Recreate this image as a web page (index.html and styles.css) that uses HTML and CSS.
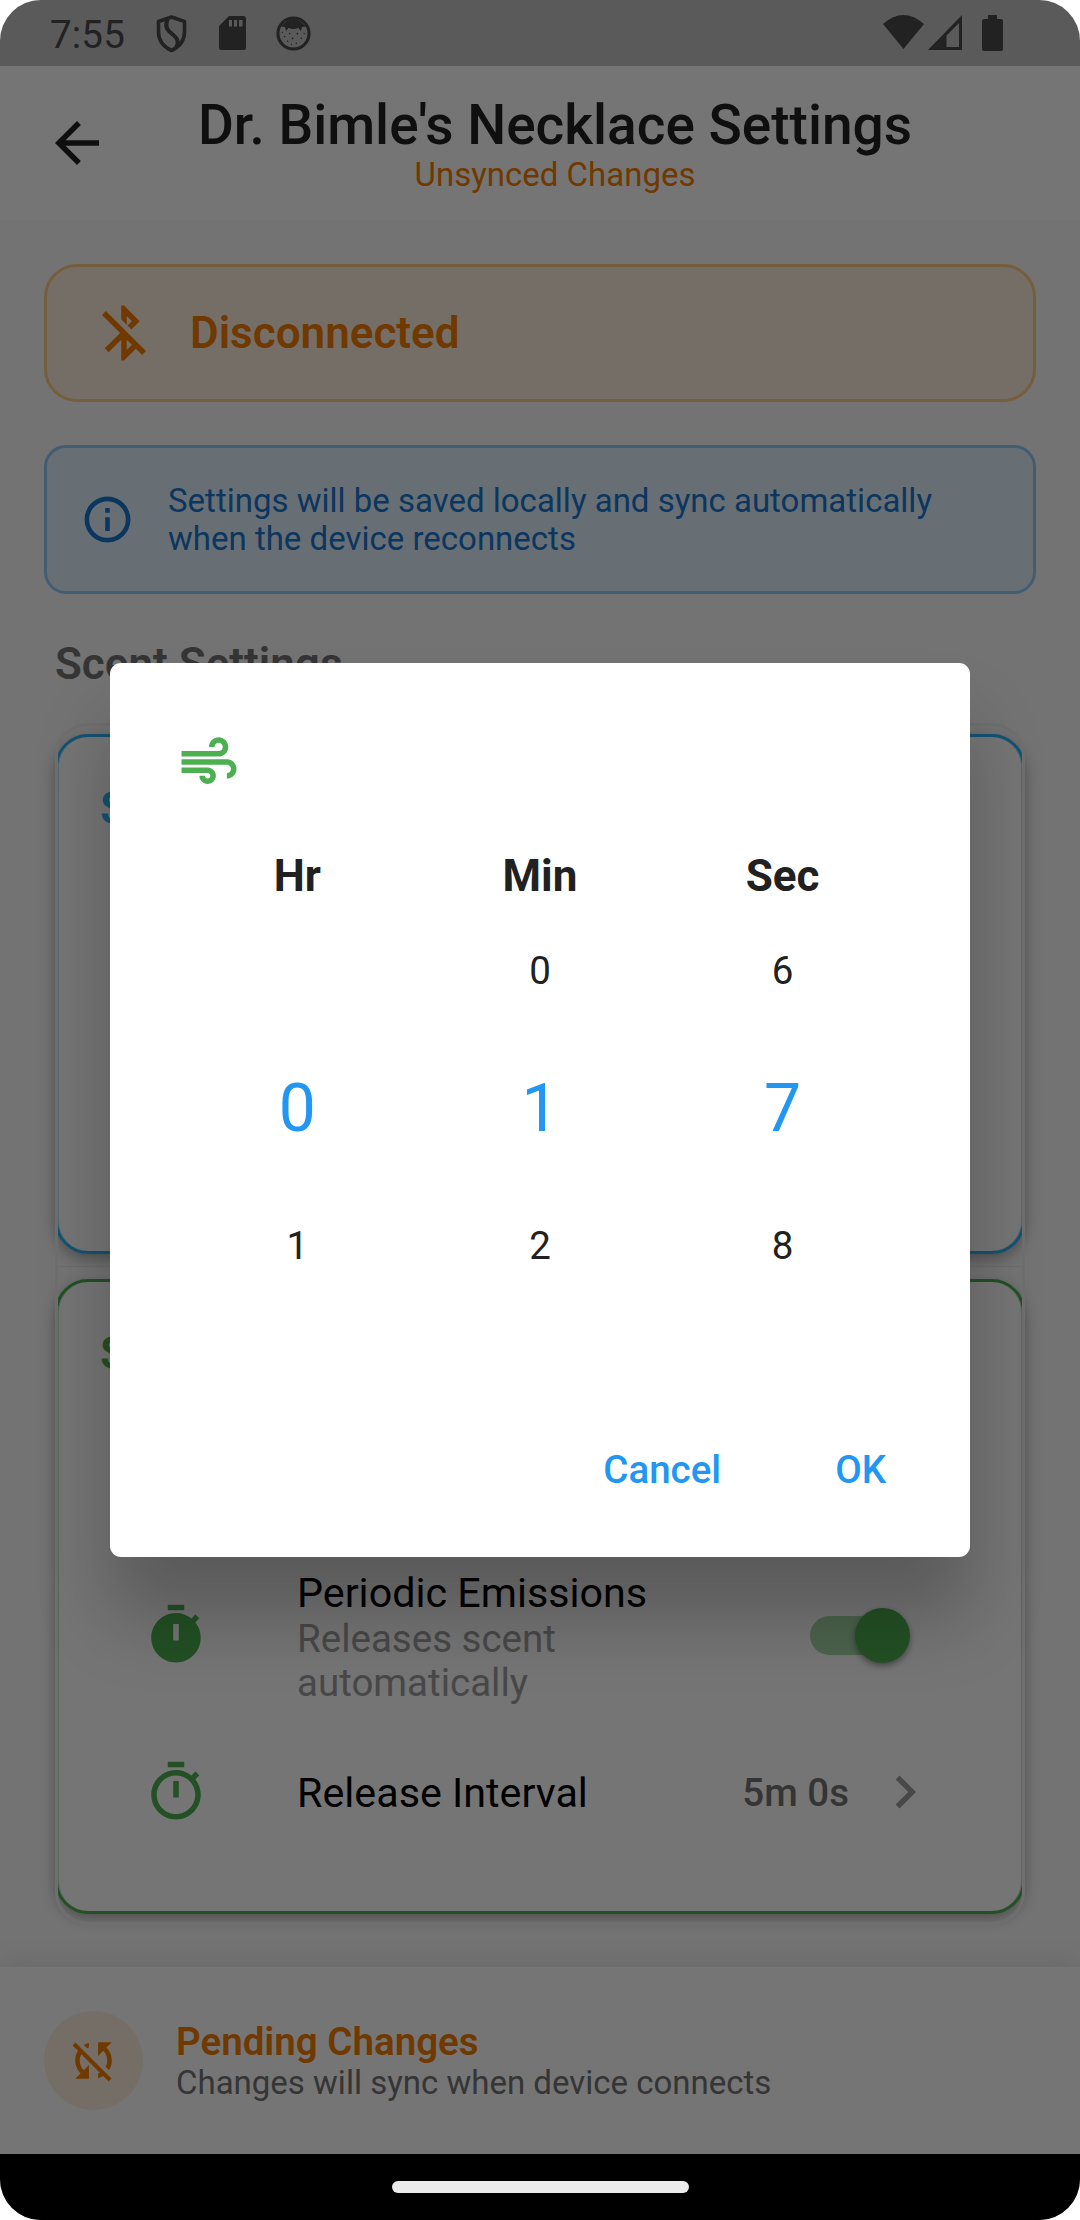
FILE: index.html
```html
<!DOCTYPE html>
<html lang="en">
<head>
<meta charset="utf-8">
<title>Dr. Bimle's Necklace Settings</title>
<link rel="stylesheet" href="styles.css">
</head>
<body>
<div class="phone">
  <div class="status-bar">
    <span class="clock">7:55</span>
    <svg class="st-shield" viewBox="0 0 31 38"><path d="M15.500 2L28.500 6.500V17C28.500 25.500 23 32 15.500 35.500C8 32 2.500 25.500 2.500 17V6.500Z" fill="none" stroke="currentColor" stroke-width="3.600" stroke-linejoin="round"/><path d="M12 4C8 11 11 15 15 18C20 22 24 25 20 33" fill="none" stroke="currentColor" stroke-width="4"/></svg>
    <svg class="st-sd" viewBox="0 0 27 34"><path fill-rule="evenodd" d="M10 0H24.500Q27 0 27 2.500V31.500Q27 34 24.500 34H2.500Q0 34 0 31.500V10ZM10 4V10.500H13V4ZM15 4V10.500H18V4ZM20 4V10.500H23.500V4Z" fill="currentColor"/></svg>
    <svg class="st-face" viewBox="0 0 36 36"><circle cx="18" cy="18" r="16" fill="none" stroke="currentColor" stroke-width="3.200"/><path d="M5 11Q18-5 31 11L27 11 25.500 15.500 23 12Q18 14.500 13 12L10.500 15.500 9 11Z" fill="currentColor"/><g fill="currentColor"><circle cx="6.500" cy="17" r=".7"/><circle cx="29" cy="18" r=".7"/><circle cx="9" cy="21" r=".8"/><circle cx="14" cy="18" r=".8"/><circle cx="17" cy="23" r="1"/><circle cx="22" cy="18" r=".9"/><circle cx="26" cy="23" r=".8"/><circle cx="12" cy="26" r=".8"/><circle cx="16" cy="29" r=".7"/><circle cx="21" cy="28" r=".8"/></g></svg>
    <span class="spacer"></span>
    <svg class="st-wifi" viewBox="0 0 41 34"><path d="M0 9Q20.500-9 41 9L20.500 34Z" fill="currentColor"/></svg>
    <svg class="st-signal" viewBox="0 0 34 35"><path fill-rule="evenodd" d="M34 0V35H0ZM31 8L18.500 20.500V32H31Z" fill="currentColor"/></svg>
    <svg class="st-battery" viewBox="0 0 21 36"><path d="M6 0H15V4H19Q21 4 21 6V34Q21 36 19 36H2Q0 36 0 34V6Q0 4 2 4H6Z" fill="currentColor"/></svg>
  </div>

  <header class="app-bar">
    <svg class="icon back" viewBox="0 0 24 24"><path d="M20 11H7.830l5.590-5.590L12 4l-8 8 8 8 1.410-1.410L7.830 13H20v-2z"/></svg>
    <div class="headline">
      <h1 class="title">Dr. Bimle's Necklace Settings</h1>
      <div class="sync-state">Unsynced Changes</div>
    </div>
  </header>

  <main class="content">
    <section class="banner banner-warn">
      <svg class="icon" viewBox="0 0 24 24"><path d="M13 5.830l1.880 1.880-1.600 1.600 1.410 1.410 3.020-3.020L12 2h-1v5.030l2 2v-3.200zM5.410 4L4 5.410 10.590 12 5 17.590 6.410 19 11 14.410V22h1l4.290-4.290 2.300 2.290L20 18.590 5.410 4zM13 18.170v-3.760l1.880 1.880L13 18.170z"/></svg>
      <span class="banner-title">Disconnected</span>
    </section>
    <section class="banner banner-info">
      <svg class="icon icon-sm" viewBox="0 0 24 24"><path d="M11 7h2v2h-2zm0 4h2v6h-2zm1-9C6.480 2 2 6.480 2 12s4.480 10 10 10 10-4.480 10-10S17.520 2 12 2zm0 18c-4.410 0-8-3.590-8-8s3.590-8 8-8 8 3.590 8 8-3.590 8-8 8z"/></svg>
      <p class="banner-text">Settings will be saved locally and sync automatically<br>when the device reconnects</p>
    </section>

    <h2 class="section-title">Scent Settings</h2>
    <div class="panel">
      <section class="card card-blue">
        <h3 class="card-title">Scent 1</h3>
      </section>
      <section class="card card-green">
        <h3 class="card-title">Scent 2</h3>
        <div class="row row-periodic">
          <svg class="icon" viewBox="0 0 24 24"><path d="M9 1h6v2H9zM19.030 7.390l1.420-1.420c-.43-.51-.9-.99-1.410-1.410l-1.420 1.420C16.070 4.740 14.120 4 12 4c-4.970 0-9 4.030-9 9s4.020 9 9 9 9-4.030 9-9c0-2.120-.74-4.070-1.970-5.610zM13 14h-2V8h2v6z"/></svg>
          <div class="row-text">
            <div class="row-title">Periodic Emissions</div>
            <div class="row-sub">Releases scent<br>automatically</div>
          </div>
          <div class="switch"><span class="thumb"></span></div>
        </div>
        <div class="row row-interval">
          <svg class="icon" viewBox="0 0 24 24"><path d="M15 1H9v2h6V1zm-4 13h2V8h-2v6zm8.030-6.610l1.420-1.420c-.43-.51-.9-.99-1.410-1.410l-1.420 1.420C16.070 4.740 14.120 4 12 4c-4.970 0-9 4.030-9 9s4.020 9 9 9 9-4.030 9-9c0-2.120-.74-4.070-1.970-5.610zM12 20c-3.870 0-7-3.130-7-7s3.130-7 7-7 7 3.130 7 7-3.130 7-7 7z"/></svg>
          <div class="row-text"><div class="row-title">Release Interval</div></div>
          <span class="row-value">5m 0s</span>
          <svg class="icon chevron" viewBox="0 0 24 24"><path d="M10 6L8.590 7.410 13.170 12l-4.580 4.590L10 18l6-6z"/></svg>
        </div>
      </section>
    </div>
  </main>

  <footer class="pending">
    <div class="avatar"><svg class="icon icon-sm" viewBox="0 0 24 24"><path d="M10 6.350V4.260c-.8.210-1.550.540-2.230.960l1.460 1.460c.25-.12.5-.24.770-.33zm-7.140-.94l2.360 2.360C4.450 8.990 4 10.440 4 12c0 2.210.910 4.200 2.360 5.640L4 20h6v-6l-2.240 2.240C6.680 15.150 6 13.660 6 12c0-1 .25-1.940.68-2.770l8.080 8.080c-.25.13-.5.25-.77.34v2.090c.8-.21 1.550-.54 2.230-.96l2.360 2.360 1.270-1.270L4.140 4.140 2.860 5.410zM20 4h-6v6l2.240-2.240C17.320 8.850 18 10.340 18 12c0 1-.25 1.940-.68 2.770l1.460 1.460C19.550 15.010 20 13.560 20 12c0-2.210-.91-4.200-2.360-5.640L20 4z"/></svg></div>
    <div>
      <div class="pending-title">Pending Changes</div>
      <div class="pending-sub">Changes will sync when device connects</div>
    </div>
  </footer>
  <div class="nav-bar"><span class="nav-pill"></span></div>

  <div class="scrim">
    <div class="dialog" role="dialog">
      <svg class="icon air" viewBox="0 0 24 24"><path d="M14.500 17c0 1.650-1.350 3-3 3s-3-1.350-3-3h2c0 .55.450 1 1 1s1-.45 1-1-.45-1-1-1H2v-2h9.500c1.650 0 3 1.350 3 3zM19 6.500C19 4.570 17.430 3 15.500 3S12 4.570 12 6.500h2c0-.83.670-1.500 1.500-1.500s1.500.670 1.500 1.500S16.330 8 15.500 8H2v2h13.500c1.930 0 3.500-1.570 3.500-3.500zM18.500 11H2v2h16.500c.83 0 1.500.670 1.500 1.500s-.67 1.500-1.500 1.500v2c1.930 0 3.500-1.570 3.500-3.500S20.430 11 18.500 11z"/></svg>
      <div class="picker">
        <div class="unit">Hr</div><div class="unit">Min</div><div class="unit">Sec</div>
        <div class="num"></div><div class="num">0</div><div class="num">6</div>
        <div class="num selected">0</div><div class="num selected">1</div><div class="num selected">7</div>
        <div class="num">1</div><div class="num">2</div><div class="num">8</div>
      </div>
      <div class="actions"><span class="action">Cancel</span><span class="action">OK</span></div>
    </div>
  </div>
</div>
</body>
</html>
```
FILE: styles.css
```css
* { box-sizing: border-box; margin: 0; padding: 0; }
body { background: #fff; font-family: Roboto, "Noto Sans", sans-serif; }
svg { display: block; flex: none; }

.phone {
  position: relative;
  display: flex;
  flex-direction: column;
  width: 1080px;
  height: 2220px;
  overflow: hidden;
  border-radius: 41px;
  background: #fafafa;
}
.icon { width: 66px; height: 66px; fill: currentColor; }
.icon-sm { width: 55px; height: 55px; }
.spacer { flex: 1; }

.status-bar {
  display: flex;
  height: 66px;
  padding: 15px 77px 0 50px;
  background: #c4c4c4;
  color: #4a4a4a;
}
.clock { width: 106px; margin-top: -3px; font-size: 38.5px; line-height: 46px; letter-spacing: 0.2px; }
.st-shield { width: 31px; height: 38px; margin-right: 32px; }
.st-sd { width: 27px; height: 34px; margin: 1px 30px 0 0; }
.st-face { width: 35px; height: 35px; margin-top: 1px; }
.st-wifi { width: 41px; height: 34px; margin-right: 4px; }
.st-signal { width: 34px; height: 35px; margin-right: 20px; }
.st-battery { width: 21px; height: 36px; }

.app-bar {
  display: flex;
  height: 154px;
  padding-left: 44px;
  background: #fff;
  color: #212121;
}
.back { margin-top: 44px; }
.headline { width: 890px; padding-top: 27px; text-align: center; }
.title { font-size: 55px; line-height: 64px; font-weight: 500; }
.sync-state { font-size: 33px; line-height: 38px; margin-top: -1px; color: #f57c00; }

.content { flex: none; height: 1747px; padding: 44px 44px 0; }
.banner { display: flex; align-items: center; border: 3px solid; }
.banner-warn {
  height: 138px;
  padding-left: 44px;
  gap: 33px;
  border-color: #ffcc80;
  border-radius: 33px;
  background: #fff0e1;
  color: #f57c00;
}
.banner-title { font-size: 44px; font-weight: 600; }
.banner-info {
  height: 149px;
  margin-top: 43px;
  padding-left: 33px;
  gap: 33px;
  border-color: #90caf9;
  border-radius: 22px;
  background: #e3f2fd;
  color: #1976d2;
}
.banner-text { font-size: 33px; line-height: 38px; }
.section-title {
  margin: 44px 0 0 11px;
  font-size: 44px;
  line-height: 52px;
  font-weight: 600;
  color: #757575;
}

.panel {
  position: relative;
  height: 1202px;
  margin: 33px 11px 0;
  padding-top: 11px;
  border-radius: 33px;
  background: linear-gradient(#eee, #eee) 0 543px / 100% 1px no-repeat #fcfcfc;
}
/* Outline sits above the cards so it trims their side borders. */
.panel::after {
  content: "";
  position: absolute;
  inset: 0;
  border: 3px solid #f1f1f1;
  border-radius: 33px;
}
.card {
  border: 3px solid;
  border-radius: 33px;
  padding: 44px 42px 0;
  background: #fff;
}
.card-blue {
  height: 520px;
  border-color: #29b6f6;
  box-shadow: inset 1px 0 #bde3f5, inset -1px 0 #bde3f5, 0 5px 14px rgba(0, 0, 0, .3);
}
.card-green {
  height: 635px;
  margin-top: 25px;
  border-color: #4caf50;
  box-shadow: inset 1px 0 #c4dfc5, inset -1px 0 #c4dfc5, 0 5px 14px rgba(0, 0, 0, .3);
}
.card-title { font-size: 46px; line-height: 54px; font-weight: 600; color: #29b6f6; }
.card-green .card-title { color: #4caf50; }
.row { display: flex; align-items: center; padding-left: 43px; color: #4caf50; }
.row-periodic { height: 134px; margin-top: 188px; }
.row-interval { height: 66px; margin-top: 57px; }
.row-text { flex: 1; padding: 3px 0 0 88px; }
.row-title { font-size: 41.25px; line-height: 48px; color: #000; }
.row-sub { font-size: 38.5px; line-height: 44px; color: #9e9e9e; }
.row-interval .row-text { padding-top: 1px; }
.row-value { padding-top: 1px; font-size: 38.5px; font-weight: 500; color: #757575; }
.chevron { margin: 0 42px 0 23px; color: #9e9e9e; }
.switch {
  display: flex;
  justify-content: flex-end;
  align-items: center;
  width: 97px;
  height: 39px;
  margin-right: 73px;
  border-radius: 20px;
  background: #a5d7a7;
}
.thumb {
  flex: none;
  width: 55px;
  height: 55px;
  margin-right: -3px;
  border-radius: 50%;
  background: #4caf50;
  box-shadow: 0 3px 6px rgba(0, 0, 0, .4);
}

.pending {
  display: flex;
  align-items: center;
  gap: 33px;
  height: 187px;
  padding-left: 44px;
  background: #fff;
  box-shadow: 0 -5px 27px rgba(0, 0, 0, .08);
}
.avatar {
  display: grid;
  place-items: center;
  width: 99px;
  height: 99px;
  border-radius: 50%;
  background: #fff0e1;
  color: #f57c00;
}
.pending-title { font-size: 38.5px; line-height: 45px; font-weight: 600; color: #f57c00; }
.pending-sub { font-size: 33px; line-height: 38px; color: #757575; }

.nav-bar { display: grid; place-items: center; height: 66px; background: #000; position: relative; z-index: 2; }
.nav-pill { width: 297px; height: 12px; border-radius: 6px; background: #ebebeb; }

.scrim {
  position: absolute;
  inset: 0;
  z-index: 1;
  padding: 663px 110px 0;
  background: rgba(0, 0, 0, .54);
}
.dialog {
  height: 894px;
  padding: 66px 66px 0;
  border-radius: 11px;
  background: #fff;
  color: #212121;
  box-shadow: 0 60px 75px rgba(0, 0, 0, .23);
}
.air { color: #4caf50; }
.picker {
  display: grid;
  grid-template-columns: repeat(3, 1fr);
  grid-template-rows: 52px repeat(3, 137.5px);
  margin-top: 55px;
  text-align: center;
}
.unit { font-size: 44px; line-height: 52px; font-weight: 700; }
.num { font-size: 38.5px; line-height: 138.5px; }
.selected { font-size: 66px; color: #2196f3; }
.actions { display: flex; justify-content: flex-end; gap: 114px; margin: 132px 18px 0 0; }
.action { font-size: 38.5px; line-height: 46px; font-weight: 500; color: #2196f3; }
```
